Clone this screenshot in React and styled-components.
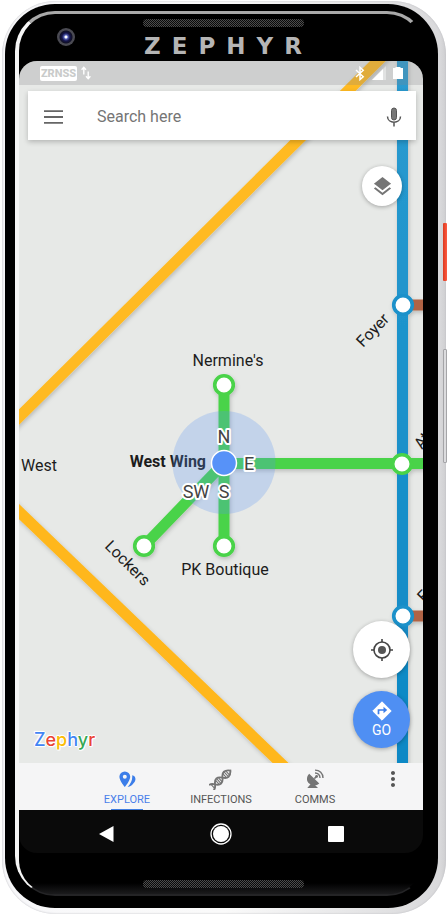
import React from "react";
import styled, { createGlobalStyle, css } from "styled-components";
import { MdLayers, MdMoreVert } from "react-icons/md";

const GlobalStyle = createGlobalStyle`
  * { box-sizing: border-box; }
  body { margin: 0; background: #fff; font-family: Roboto, "Liberation Sans", sans-serif; }
  button { border: 0; padding: 0; background: none; font: inherit; color: inherit; cursor: pointer; }
`;

/* ---------- Device body ---------- */

const Page = styled.main`
  display: flex;
  min-height: 100vh;
  padding: 1px 2px 3px;
`;

const Case = styled.div`
  position: relative;
  display: flex;
  flex: 1;
  padding: 3px 8px 6px 3px;
  border-radius: 54px;
  background: linear-gradient(to right, #ececf0, #f8f8fa 3px, #fafafa 50%, #d9d9db calc(100% - 6px), #cfcfd1);
  box-shadow: inset 0 0 2px #b9b9be;
`;

const SideKey = styled.span`
  position: absolute;
  right: -1px;
  width: 4px;
  border-radius: 1px;
  ${({ $kind }) =>
    $kind === "power"
      ? css`top: 222px; height: 58px; background: linear-gradient(to right, #d93a20, #ff5a40);`
      : css`top: 348px; height: 114px; background: #dcdcde; border: 1px solid #a5a5a8;`}
`;

const Frame = styled.div`
  display: flex;
  flex: 1;
  padding: 7px 11px 12px 10px;
  border-radius: 50px;
  background: #000;
`;

const Face = styled.div`
  display: flex;
  flex: 1;
  flex-direction: column;
  border-style: solid;
  border-width: 3px 4px 2px 4px;
  border-color: #a9a9a9 #000 #242426 #f6f6f6;
  border-radius: 40px;
  background: #000;
`;

const Header = styled.header`
  display: grid;
  grid-template-columns: 1fr auto 1fr;
  height: 47px;
  padding: 5px 0 0 5px;
`;

const Camera = styled.span`
  width: 18px;
  height: 18px;
  margin: 9px 0 0 33px;
  border-radius: 50%;
  background: radial-gradient(circle, #fff 0 1px, #5560b8 2px, #14144a 4px, #101026 6px, #4a4a52 7px);
`;

const Brand = styled.div`
  display: flex;
  flex-direction: column;
  align-items: center;
  gap: 7px;
`;

const Speaker = styled.span`
  width: 161px;
  height: 8px;
  border-radius: 4px;
  background: repeating-conic-gradient(#4c4c4c 0 25%, #0a0a0a 0 50%) 0 0 / 2px 2px;
`;

const BrandName = styled.h1`
  margin: 0;
  padding-left: 10px;
  font: bold 23px/24px "DejaVu Sans", sans-serif;
  letter-spacing: 11px;
  color: #b5b5b5;
`;

const Chin = styled.footer`
  display: flex;
  justify-content: center;
  align-items: flex-end;
  height: 41px;
  padding: 0 0 6px 5px;
  border-radius: 0 0 34px 34px;
  background: linear-gradient(#000 30px, #1b1b1d);
`;

/* ---------- Screen ---------- */

const Screen = styled.section`
  display: flex;
  flex: 1;
  flex-direction: column;
  overflow: hidden;
  border-radius: 18px;
  background: #0a0a0a;
`;

const MapArea = styled.div`
  position: relative;
  display: flex;
  flex: 1;
  flex-direction: column;
  background: #e7e9e7;
`;

const TransitMap = styled.svg`
  position: absolute;
  inset: 0;
  width: 100%;
  height: 100%;
`;

const Overlay = styled.div`
  position: relative;
  display: flex;
  flex: 1;
  flex-direction: column;
`;

const StatusBar = styled.div`
  display: flex;
  align-items: center;
  gap: 4px;
  height: 24px;
  padding: 0 20px 0 21px;
  background: rgba(130, 133, 135, 0.25);
  color: #fff;
`;

const Carrier = styled.span`
  width: 37px;
  border-radius: 2px;
  background: #fff;
  color: #c9cbca;
  text-align: center;
  font-weight: 800;
  font-size: 11px;
  line-height: 15px;
`;

const StatusIcons = styled.div`
  display: flex;
  align-items: center;
  gap: 7px;
  margin-left: auto;
`;

const SearchBar = styled.form`
  display: flex;
  align-items: center;
  height: 49px;
  margin: 6px 7px 0 9px;
  padding: 2px 14px 0 16px;
  background: #fff;
  box-shadow: 0 2px 5px rgba(0, 0, 0, 0.22);
`;

const SearchInput = styled.input`
  flex: 1;
  min-width: 0;
  margin: 0 16px 0 34px;
  padding: 0;
  border: 0;
  outline: 0;
  background: none;
  font: 16px/20px Roboto, sans-serif;
  color: #444;
  &::placeholder { color: #757575; opacity: 1; }
`;

const IconButton = styled.button`
  display: grid;
  place-items: center;
  flex: none;
`;

const RoundButton = styled.button`
  display: flex;
  flex-direction: column;
  align-items: center;
  justify-content: center;
  width: ${({ $size }) => $size}px;
  height: ${({ $size }) => $size}px;
  border-radius: 50%;
  background: ${({ $primary }) => ($primary ? "#4f8ff3" : "#fff")};
  color: ${({ $primary }) => ($primary ? "#fff" : "#757575")};
  font-size: 14px;
  line-height: 18px;
  box-shadow: 0 1px 4px rgba(0, 0, 0, 0.3);
`;

const TopTools = styled.div`
  display: flex;
  justify-content: flex-end;
  padding: 26px 21px 0 0;
`;

const BottomTools = styled.div`
  display: flex;
  align-items: flex-end;
  justify-content: space-between;
  margin-top: auto;
  padding: 0 13px 13px 15px;
`;

const Wordmark = styled.span`
  font: 500 18px/20px Inter, sans-serif;
  text-shadow: 1px 0 #fff, -1px 0 #fff, 0 1px #fff, 0 -1px #fff, 1px 1px 1px #fff, -1px -1px 1px #fff;
`;

const Letter = styled.span`
  color: ${({ $color }) => $color};
`;

const ButtonStack = styled.div`
  display: flex;
  flex-direction: column;
  gap: 13px;
  padding-bottom: 2px;
`;

const TabBar = styled.nav`
  display: grid;
  grid-template-columns: 61px 1fr 1fr 1fr 61px;
  height: 47px;
  background: #f5f5f6;
`;

const Tab = styled.button`
  display: flex;
  flex-direction: column;
  align-items: center;
  padding-top: 5px;
  color: ${({ $active }) => ($active ? "#4a80ea" : "#555")};
  font-size: 11px;
  line-height: 14px;
  &:first-of-type { grid-column: 2; }
  &::after {
    content: "";
    width: 32px;
    height: 1px;
    margin-top: auto;
    background: ${({ $active }) => ($active ? "#3f7de0" : "transparent")};
  }
`;

const TabIcon = styled.span`
  display: grid;
  place-items: center;
  height: 22px;
  margin-bottom: 3px;
  color: ${({ $active }) => ($active ? "#3b7de9" : "#757575")};
`;

const MoreButton = styled(IconButton)`
  align-self: start;
  padding-top: 4px;
  color: #555;
`;

const SystemNav = styled.nav`
  display: flex;
  justify-content: center;
  gap: 71px;
  height: 43px;
  padding-top: 5px;
`;

const SystemButton = styled(IconButton)`
  width: 44px;
`;

/* ---------- Map data ---------- */

const GREEN = "#49d348";
const BLUE = "#1b91ca";

const stations = [
  { x: 224, y: 385, color: GREEN },
  { x: 224, y: 546, color: GREEN },
  { x: 144, y: 546, color: GREEN },
  { x: 402, y: 464, color: GREEN },
  { x: 403, y: 305, color: BLUE },
  { x: 403, y: 616, color: BLUE },
];

const labels = [
  { text: "Nermine's", x: 228, y: 366, anchor: "middle" },
  { text: "PK Boutique", x: 225, y: 575, anchor: "middle" },
  { text: "West", x: 21, y: 471 },
  { text: "West Wing", x: 206, y: 467, anchor: "end", bold: true },
  { text: "Lockers", x: 104, y: 547, turn: 45 },
  { text: "Foyer", x: 363, y: 348, turn: -46 },
  { text: "At", x: 422, y: 450, turn: -54 },
  { text: "Fo", x: 424, y: 603, turn: -46 },
];

const directions = [
  { text: "N", x: 224, y: 443 },
  { text: "E", x: 249, y: 470 },
  { text: "SW", x: 196, y: 498 },
  { text: "S", x: 224, y: 498 },
];

const StationLabel = styled.text`
  font-size: 16px;
  font-weight: ${({ $bold }) => ($bold ? 700 : 400)};
  fill: #1c1c1c;
`;

const DirectionLabel = styled.text`
  font-size: 18px;
  text-anchor: middle;
  fill: #444;
  stroke: #fff;
  stroke-width: 4px;
  stroke-linejoin: round;
  paint-order: stroke;
`;

function MapDrawing() {
  return (
    <TransitMap viewBox="19 61 404 702" preserveAspectRatio="xMidYMid slice" aria-label="Transit map">
      <defs>
        <linearGradient id="river" gradientUnits="userSpaceOnUse" x1="0" y1="61" x2="0" y2="763">
          <stop offset="0" stopColor="#2a9bd0" />
          <stop offset="1" stopColor="#0d88c5" />
        </linearGradient>
        <filter id="soft" filterUnits="userSpaceOnUse" x="0" y="40" width="448" height="740">
          <feDropShadow dx="1" dy="2" stdDeviation="2" floodOpacity="0.2" />
        </filter>
      </defs>
      <g fill="none" strokeWidth="11" filter="url(#soft)">
        <path d="M9 427 L389 50" stroke="#ffba22" />
        <path d="M9 502 L291 773" stroke="#ffb71d" />
        <path d="M402 305 H430 M402 616 H430" stroke="#b06445" />
        <path d="M402.5 50 V773" stroke="url(#river)" />
        <path d="M224 385 V545 M224 463.5 H430 M224 463 L144 546" stroke={GREEN} />
        {stations.map((s) => (
          <circle key={`${s.x}-${s.y}`} cx={s.x} cy={s.y} r="9.3" fill="#fff" stroke={s.color} strokeWidth="3.6" />
        ))}
      </g>
      {labels.map((l) => (
        <StationLabel
          key={l.text}
          $bold={l.bold}
          x={l.x}
          y={l.y}
          textAnchor={l.anchor}
          transform={l.turn ? `rotate(${l.turn} ${l.x} ${l.y})` : undefined}
        >
          {l.text}
        </StationLabel>
      ))}
      <circle cx="224" cy="462.5" r="51.5" fill="#5794f5" fillOpacity="0.25" />
      {directions.map((d) => (
        <DirectionLabel key={d.text} x={d.x} y={d.y}>{d.text}</DirectionLabel>
      ))}
      <circle cx="224" cy="463" r="12.5" fill="#5792f8" stroke="#fff" strokeWidth="1.5" />
    </TransitMap>
  );
}

/* ---------- Icons ---------- */

const MenuIcon = () => (
  <svg width="19" height="14" viewBox="0 0 19 14" stroke="#666" strokeWidth="1.8">
    <path d="M0 1.2H19M0 7H19M0 12.8H19" />
  </svg>
);

const MicIcon = () => (
  <svg width="16" height="20" viewBox="0 0 16 20" fill="none">
    <rect x="5.5" y="1" width="5" height="12" rx="2.5" fill="#777" stroke="#555" />
    <path d="M1.5 9.5C1.5 17 14.5 17 14.5 9.5M8 15V19.5" stroke="#555" strokeWidth="1.5" />
  </svg>
);

const DataIcon = () => (
  <svg width="10" height="14" viewBox="0 0 10 14" fill="none" stroke="#fff" strokeWidth="1.4">
    <path d="M2.8 8.5V1.5M0.6 3.8L2.8 1.3L5 3.8M7.2 5.5V12.5M5 10.2L7.2 12.7L9.4 10.2" />
  </svg>
);

const BluetoothIcon = () => (
  <svg width="10" height="15" viewBox="0 0 10 15" fill="none" stroke="#fff" strokeWidth="1.5">
    <path d="M1 4L8.2 10.8L5 13.6V1.4L8.2 4.2L1 11" />
  </svg>
);

const SignalIcon = () => (
  <svg width="14" height="14" viewBox="0 0 14 14" fill="#fff">
    <path d="M14 0V14H0Z" fillOpacity="0.4" />
    <path d="M11 3V14H0Z" />
  </svg>
);

const BatteryIcon = () => (
  <svg width="10" height="12" viewBox="0 0 10 12" fill="#fff">
    <path d="M2.5 0H7.5V1H10V12H0V1H2.5Z" />
  </svg>
);

const LocateIcon = () => (
  <svg width="24" height="24" viewBox="0 0 24 24" fill="none" stroke="#444" strokeWidth="1.6">
    <circle cx="12" cy="12" r="8" />
    <circle cx="12" cy="12" r="4" fill="#555" stroke="none" />
    <path d="M12 1V4M12 20V23M1 12H4M20 12H23" />
  </svg>
);

const DirectionsIcon = () => (
  <svg width="20" height="20" viewBox="0 0 20 20">
    <path d="M10 0.8L19.2 10L10 19.2L0.8 10Z" fill="#fff" stroke="#fff" strokeLinejoin="round" />
    <path d="M6.5 13.2V9H13" fill="none" stroke="#3b7de9" strokeWidth="1.7" />
    <path d="M11.5 5.8L15.2 9L11.5 12.2Z" fill="#3b7de9" />
  </svg>
);

const ExploreIcon = () => (
  <svg width="17" height="17" viewBox="0 0 17 17">
    <path fillRule="evenodd" fill="#3b7de9" d="M5.8 .4A5.4 5.4 0 0 0 .4 5.8C.4 9.9 5.8 16 5.8 16S11.2 9.9 11.2 5.8A5.4 5.4 0 0 0 5.8 .4ZM5.8 3.8A2 2 0 1 1 5.8 7.8A2 2 0 0 1 5.8 3.8Z" />
    <path fill="#3b7de9" d="M13.2 4.2C16.9 5 17.4 8.7 14.9 11.8C13 14.2 11.4 15.7 8.6 16C11.7 12.6 13.7 9.4 13.2 4.2Z" />
  </svg>
);

const DnaIcon = () => (
  <svg width="24" height="22" viewBox="0 0 24 22" fill="none" stroke="#757575">
    <g transform="rotate(-42 12 11)">
      <path d="M-1 7.5C4 7.5 4 14.5 9 14.5S14 7.5 19 7.5C22 7.5 23.5 9.5 25 11.5" strokeWidth="1.9" />
      <path d="M-1 14.5C4 14.5 4 7.5 9 7.5S14 14.5 19 14.5C22 14.5 23.5 12.5 25 10.5" strokeWidth="1.9" />
      <path d="M1 8V14M7 8.5V13.5M9 7.5V14.5M11 8.5V13.5M17 8.5V13.5M19 7.5V14.5M21 8.5V13.5" strokeWidth="1.1" />
    </g>
  </svg>
);

const DishIcon = () => (
  <svg width="18" height="20" viewBox="0 0 18 20" fill="none">
    <path d="M3.2 4.8C-.4 8.6 .7 13 3.6 14.8C6.4 16.8 10.5 17 13.3 14.4Z" fill="#757575" />
    <path d="M5.5 14L1.3 19H12L8 15Z" fill="#757575" />
    <path d="M8.3 9.6L11 7" stroke="#757575" strokeWidth="1.5" />
    <circle cx="10.6" cy="7.4" r="1.4" fill="#757575" />
    <path d="M9 4C11.8 3.9 14 6 14 9M9 1.1C13.6 1 17 4.5 17 9" stroke="#757575" strokeWidth="1.4" />
  </svg>
);

const BackIcon = () => (
  <svg width="16" height="18" viewBox="0 0 16 18"><path d="M15.5 1V17L1 9Z" fill="#fff" /></svg>
);

const HomeIcon = () => (
  <svg width="22" height="22" viewBox="0 0 22 22">
    <circle cx="11" cy="11" r="10" fill="none" stroke="#fff" strokeWidth="1.3" />
    <circle cx="11" cy="11" r="8" fill="#fff" />
  </svg>
);

const RecentIcon = () => (
  <svg width="16" height="16" viewBox="0 0 16 16"><rect width="16" height="16" rx="1" fill="#fff" /></svg>
);

/* ---------- App ---------- */

const wordmark = [
  ["Z", "#4285f4"],
  ["e", "#ea4335"],
  ["p", "#fbbc05"],
  ["h", "#4285f4"],
  ["y", "#34a853"],
  ["r", "#ea4335"],
];

const tabs = [
  { name: "EXPLORE", icon: <ExploreIcon />, active: true },
  { name: "INFECTIONS", icon: <DnaIcon /> },
  { name: "COMMS", icon: <DishIcon /> },
];

export default function App() {
  return (
    <Page>
      <GlobalStyle />
      <Case>
        <SideKey $kind="power" />
        <SideKey $kind="volume" />
        <Frame>
          <Face>
            <Header>
              <Camera />
              <Brand>
                <Speaker />
                <BrandName>ZEPHYR</BrandName>
              </Brand>
            </Header>
            <Screen>
              <MapArea>
                <MapDrawing />
                <Overlay>
                  <StatusBar>
                    <Carrier>ZRNSS</Carrier>
                    <DataIcon />
                    <StatusIcons>
                      <BluetoothIcon />
                      <SignalIcon />
                      <BatteryIcon />
                    </StatusIcons>
                  </StatusBar>
                  <SearchBar onSubmit={(e) => e.preventDefault()}>
                    <IconButton type="button" aria-label="Menu"><MenuIcon /></IconButton>
                    <SearchInput type="text" aria-label="Search" placeholder="Search here" />
                    <IconButton type="button" aria-label="Voice search"><MicIcon /></IconButton>
                  </SearchBar>
                  <TopTools>
                    <RoundButton $size={40} aria-label="Layers"><MdLayers size={23} /></RoundButton>
                  </TopTools>
                  <BottomTools>
                    <Wordmark>
                      {wordmark.map(([char, color]) => (
                        <Letter key={char} $color={color}>{char}</Letter>
                      ))}
                    </Wordmark>
                    <ButtonStack>
                      <RoundButton $size={57} aria-label="My location"><LocateIcon /></RoundButton>
                      <RoundButton $size={57} $primary>
                        <DirectionsIcon />
                        GO
                      </RoundButton>
                    </ButtonStack>
                  </BottomTools>
                </Overlay>
              </MapArea>
              <TabBar>
                {tabs.map((t) => (
                  <Tab key={t.name} $active={t.active}>
                    <TabIcon $active={t.active}>{t.icon}</TabIcon>
                    {t.name}
                  </Tab>
                ))}
                <MoreButton aria-label="More"><MdMoreVert size={24} /></MoreButton>
              </TabBar>
              <SystemNav>
                <SystemButton aria-label="Back"><BackIcon /></SystemButton>
                <SystemButton aria-label="Home"><HomeIcon /></SystemButton>
                <SystemButton aria-label="Recent apps"><RecentIcon /></SystemButton>
              </SystemNav>
            </Screen>
            <Chin><Speaker /></Chin>
          </Face>
        </Frame>
      </Case>
    </Page>
  );
}
